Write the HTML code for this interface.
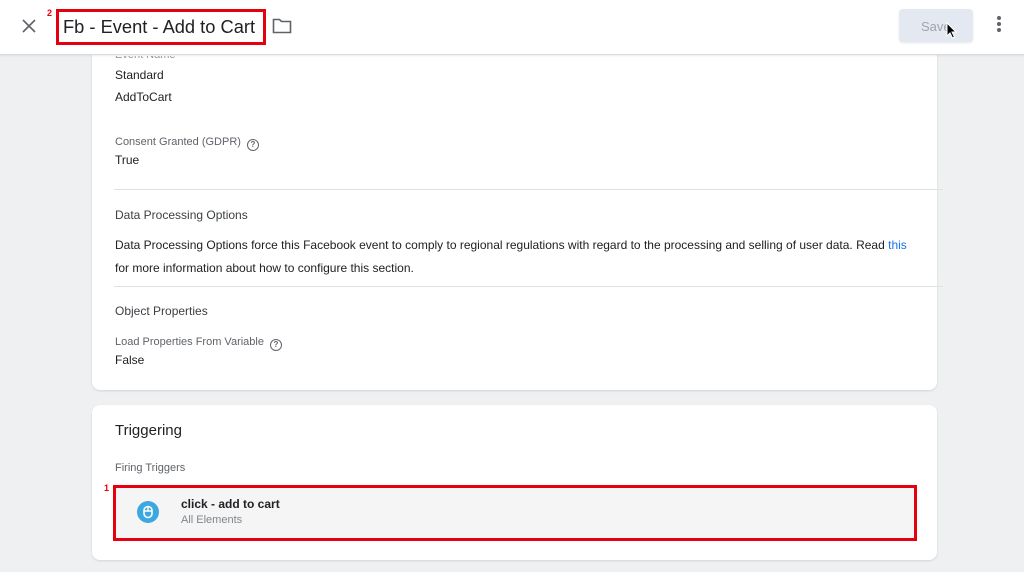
<!DOCTYPE html><html><head><style>
body{margin:0;width:1024px;height:572px;overflow:hidden;background:#eef0f2;font-family:"Liberation Sans",sans-serif;position:relative}
.a{position:absolute;white-space:nowrap}
.hdr{position:absolute;left:0;top:0;width:1024px;height:54px;background:#fff;border-bottom:1px solid #dadce0;box-shadow:0 1px 2px rgba(0,0,0,.08)}
.card{position:absolute;background:#fff;border-radius:8px;box-shadow:0 1px 2px rgba(0,0,0,.12)}
.lbl{font-size:11px;color:#5f6368}
.val{font-size:12px;color:#202124}
.hd{font-size:12px;color:#3c4043}
.q{display:inline-block;width:10px;height:10px;border:1.3px solid #5f6368;border-radius:50%;font-size:8px;text-align:center;line-height:10px;margin-left:6px;vertical-align:-2px;font-weight:bold}
.hr{position:absolute;left:114px;width:829px;height:1px;background:#e0e0e0}
</style></head><body>
<div class="card" style="left:92px;top:40px;width:845px;height:350px"></div>
<div class="card" style="left:92px;top:405px;width:845px;height:155px"></div>
<div class="hdr"></div>
<svg class="a" style="left:22px;top:19px" width="14" height="14"><path d="M1 1L13 13M13 1L1 13" stroke="#5f6368" stroke-width="1.6"/></svg>
<div class="a" style="left:47px;top:8px;font-size:9px;color:#e00;font-weight:bold">2</div>
<div class="a" style="left:56px;top:9px;width:204px;height:30px;border:3px solid #e3000f"></div>
<div class="a" style="left:63px;top:16px;font-size:18.3px;color:#202124">Fb - Event - Add to Cart</div>
<svg class="a" style="left:272px;top:17px" width="20" height="17" viewBox="0 0 20 17"><path d="M1.5 2.5h6l2 2h9v11h-17z" fill="none" stroke="#5f6368" stroke-width="1.6"/></svg>
<div class="a" style="left:899px;top:9px;width:74px;height:33px;background:#e4e8f0;border-radius:4px;box-shadow:0 1px 2px rgba(0,0,0,.1)"></div>
<div class="a" style="left:921px;top:19px;font-size:13px;color:#a0a6ae">Save</div>
<svg class="a" style="left:946px;top:22px" width="12" height="17"><path d="M1 1v13l3-3 2.5 5 2-1-2.5-5h4z" fill="#000" stroke="#fff"/></svg>
<div class="a" style="left:997px;top:16px;width:4px"><div style="width:4px;height:4px;border-radius:2px;background:#5f6368;margin-bottom:2px"></div><div style="width:4px;height:4px;border-radius:2px;background:#5f6368;margin-bottom:2px"></div><div style="width:4px;height:4px;border-radius:2px;background:#5f6368"></div></div>
<div class="a lbl" style="left:115px;top:56px;height:6px;overflow:hidden;color:#999"><div style="margin-top:-7px">Event Name</div></div>
<div class="a val" style="left:115px;top:68px">Standard</div>
<div class="a val" style="left:115px;top:90px">AddToCart</div>
<div class="a lbl" style="left:115px;top:136px">Consent Granted (GDPR)<span class="q">?</span></div>
<div class="a val" style="left:115px;top:153px">True</div>
<div class="hr" style="top:189px"></div>
<div class="a hd" style="left:115px;top:208px">Data Processing Options</div>
<div class="a val" style="left:115px;top:238px">Data Processing Options force this Facebook event to comply to regional regulations with regard to the processing and selling of user data. Read <span style="color:#1a73e8">this</span></div>
<div class="a val" style="left:115px;top:261px">for more information about how to configure this section.</div>
<div class="hr" style="top:286px"></div>
<div class="a hd" style="left:115px;top:304px">Object Properties</div>
<div class="a lbl" style="left:115px;top:336px">Load Properties From Variable<span class="q">?</span></div>
<div class="a val" style="left:115px;top:353px">False</div>
<div class="a" style="left:115px;top:422px;font-size:15px;color:#202124">Triggering</div>
<div class="a lbl" style="left:115px;top:462px">Firing Triggers</div>
<div class="a" style="left:104px;top:483px;font-size:9px;color:#e00;font-weight:bold">1</div>
<div class="a" style="left:113px;top:485px;width:798px;height:50px;border:3px solid #e3000f;background:#f5f5f6"></div>
<div class="a" style="left:137px;top:501px;width:22px;height:22px;border-radius:50%;background:#3da7e2"></div>
<svg class="a" style="left:142px;top:505px" width="12" height="14"><rect x="2" y="1.5" width="8" height="11" rx="4" fill="none" stroke="#fff" stroke-width="1.6"/><path d="M2 6h8M6 2v4" stroke="#fff" stroke-width="1.4"/></svg>
<div class="a" style="left:181px;top:497px;font-size:12px;font-weight:bold;color:#202124">click - add to cart</div>
<div class="a lbl" style="left:181px;top:514px;color:#80868b">All Elements</div>
</body></html>
